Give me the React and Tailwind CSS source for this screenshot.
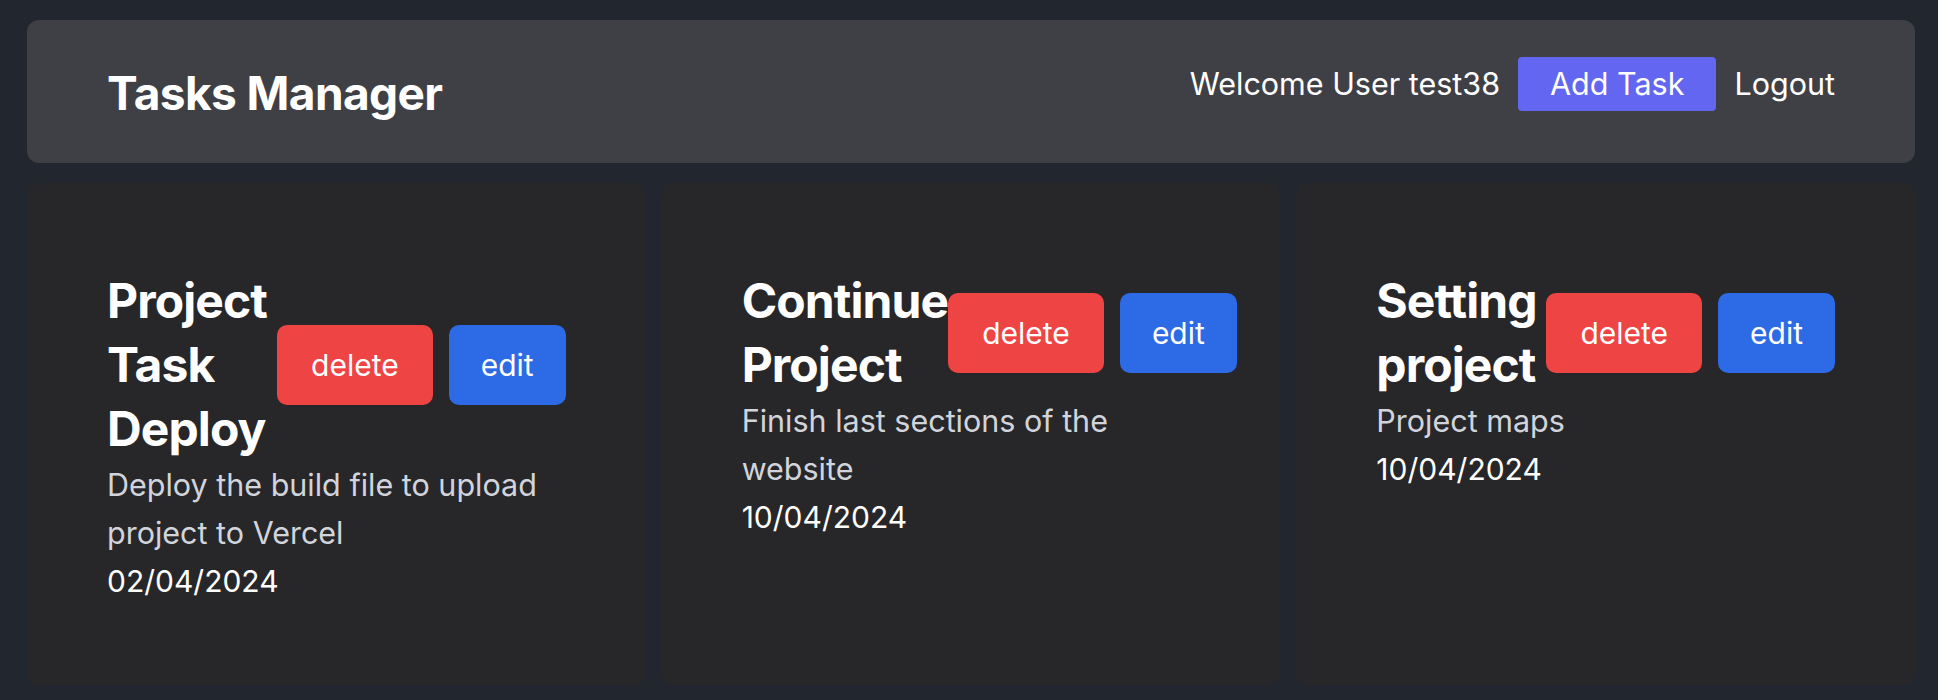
const tasks = [
  { id: 1, title: 'Project Task Deploy', description: 'Deploy the build file to upload project to Vercel', date: '02/04/2024' },
  { id: 2, title: 'Continue Project', description: 'Finish last sections of the website', date: '10/04/2024' },
  { id: 3, title: 'Setting project', description: 'Project maps', date: '10/04/2024' },
];

function TaskCard({ task }) {
  return (
    <div className="bg-[#27272a] rounded-xl px-20 pt-[86px] pb-20">
      <div className="flex items-center">
        <h2 className="text-[48px] leading-[64px] tracking-[-0.9px] font-bold text-white">{task.title}</h2>
        <div className="flex gap-4 shrink-0">
          <button className="bg-[#ef4444] text-white text-[30px] leading-[40px] px-[34px] h-[80px] rounded-[10px]">delete</button>
          <button className="bg-[#2d6ae6] text-white text-[30px] leading-[40px] px-8 h-[80px] rounded-[10px]">edit</button>
        </div>
      </div>
      <p className="text-[30.5px] leading-[48px] text-[#d1d5db]">{task.description}</p>
      <p className="text-[30px] leading-[48px] text-white">{task.date}</p>
    </div>
  );
}

export default function App() {
  return (
    <div className="min-h-screen bg-[#22262e] pl-[27px] pr-[23px] pt-5 pb-[18px] flex flex-col gap-5" style={{ fontFamily: 'Inter, "Noto Sans", sans-serif' }}>
      <header className="bg-[#3f3f46] rounded-xl h-[143px] pl-20 pr-20 pt-[37px] flex items-start justify-between">
        <h1 className="mt-1 text-[46px] leading-[64px] tracking-[-0.6px] font-bold text-white">Tasks Manager</h1>
        <div className="flex items-center gap-[18px] text-[30.5px] text-white">
          <span>Welcome User test38</span>
          <button className="bg-[#6366f1] h-[54px] px-8 rounded">Add Task</button>
          <button>Logout</button>
        </div>
      </header>

      <main className="grid grid-cols-3 gap-4">
        {tasks.map((task) => (
          <TaskCard key={task.id} task={task} />
        ))}
      </main>
    </div>
  );
}
